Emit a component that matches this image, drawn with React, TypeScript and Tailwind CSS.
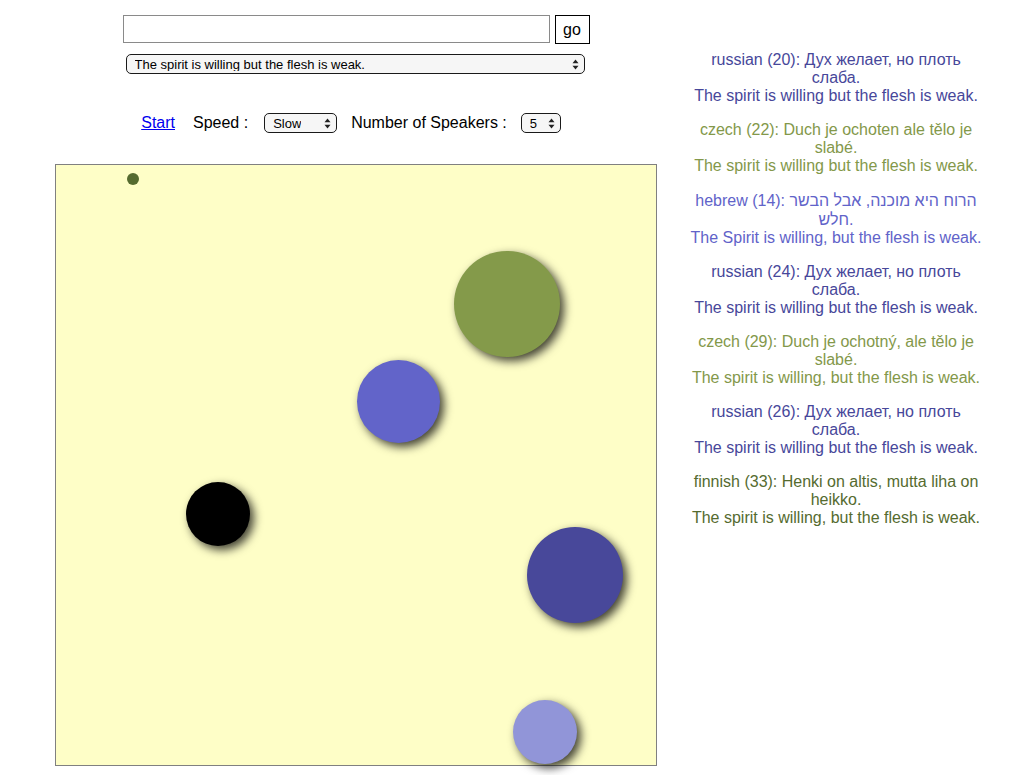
import React from "react";

const ff = { fontFamily: '"Liberation Sans", Arial, sans-serif' };

function Arrows() {
  return (
    <svg width="7" height="11" viewBox="0 0 7 11" className="shrink-0">
      <path d="M3.5 0.5 L6.5 4.2 L0.5 4.2 Z" fill="#222" />
      <path d="M3.5 10.5 L6.5 6.8 L0.5 6.8 Z" fill="#222" />
    </svg>
  );
}

// fake mac-style select box
function Pick({ label, w }: { label: string; w: string }) {
  return (
    <div
      className={`${w} h-[20px] flex items-center justify-between rounded-[5px] border border-[#1a1a1a] bg-[#f6f6f6] pl-[8px] pr-[5px] text-[13px] text-black leading-none`}
    >
      <span className="truncate">{label}</span>
      <Arrows />
    </div>
  );
}

const lines = [
  { c: "text-[#47479a]", a: "russian (20): Дух желает, но плоть слаба.", b: "The spirit is willing but the flesh is weak." },
  { c: "text-[#83984a]", a: "czech (22): Duch je ochoten ale tělo je slabé.", b: "The spirit is willing but the flesh is weak." },
  { c: "text-[#6163c9]", a: "hebrew (14): הרוח היא מוכנה, אבל הבשר חלש.", b: "The Spirit is willing, but the flesh is weak.", tall: true },
  { c: "text-[#47479a]", a: "russian (24): Дух желает, но плоть слаба.", b: "The spirit is willing but the flesh is weak." },
  { c: "text-[#83984a]", a: "czech (29): Duch je ochotný, ale tělo je slabé.", b: "The spirit is willing, but the flesh is weak." },
  { c: "text-[#47479a]", a: "russian (26): Дух желает, но плоть слаба.", b: "The spirit is willing but the flesh is weak." },
  { c: "text-[#556b2f]", a: "finnish (33): Henki on altis, mutta liha on heikko.", b: "The spirit is willing, but the flesh is weak." },
];

// speakers on the canvas
const balls = [
  { l: 398, t: 86, d: 106, bg: "bg-[#849a4a]" },
  { l: 301, t: 195, d: 83, bg: "bg-[#6264c9]" },
  { l: 130, t: 317, d: 64, bg: "bg-black" },
  { l: 471, t: 362, d: 96, bg: "bg-[#48489a]" },
  { l: 457, t: 535, d: 64, bg: "bg-[#9195d8]" },
];

export default function App() {
  return (
    <div className="flex items-start bg-white min-h-[775px]" style={ff}>
      {/* left column */}
      <div className="ml-[55px] w-[602px] pt-[15px] flex flex-col items-center">
        <div className="flex gap-[5px]">
          <input className="w-[427px] h-[28px] border border-[#8a8a8a] outline-none px-1" />
          <button className="w-[35px] h-[29px] border border-black bg-white text-[16px] text-black leading-none">
            go
          </button>
        </div>
        <div className="mt-[10px] -ml-[2px]">
          <Pick label="The spirit is willing but the flesh is weak." w="w-[459px]" />
        </div>

        <div className="mt-[37px] -ml-[10px] flex items-center text-[16px] text-black">
          <a href="#" className="text-[#0000ee] underline">Start</a>
          <span className="ml-[18px]">Speed :</span>
          <div className="ml-[16px]">
            <Pick label="Slow" w="w-[73px]" />
          </div>
          <span className="ml-[14px]">Number of Speakers :</span>
          <div className="ml-[14px]">
            <Pick label="5" w="w-[40px]" />
          </div>
        </div>

        <div className="mt-[29px] relative w-[602px] h-[602px] border border-[#808080] bg-[#fefec7]">
          <div className="absolute left-[71px] top-[8px] w-[12px] h-[12px] rounded-full bg-[#556b2f]" />
          {balls.map((b, i) => (
            <div
              key={i}
              className={`absolute rounded-full ${b.bg} shadow-[4px_4px_10px_rgba(0,0,0,0.75)]`}
              style={{ left: b.l, top: b.t, width: b.d, height: b.d }}
            />
          ))}
        </div>
      </div>

      {/* translations */}
      <div className="ml-[29px] w-[300px] pt-[51px] text-center text-[16px] leading-[18px]">
        {lines.map((x, i) => (
          <div key={i} className={`${x.c} mb-[16px]`}>
            <div className={x.tall ? "leading-[19px]" : ""}>{x.a}</div>
            <div>{x.b}</div>
          </div>
        ))}
      </div>
    </div>
  );
}
